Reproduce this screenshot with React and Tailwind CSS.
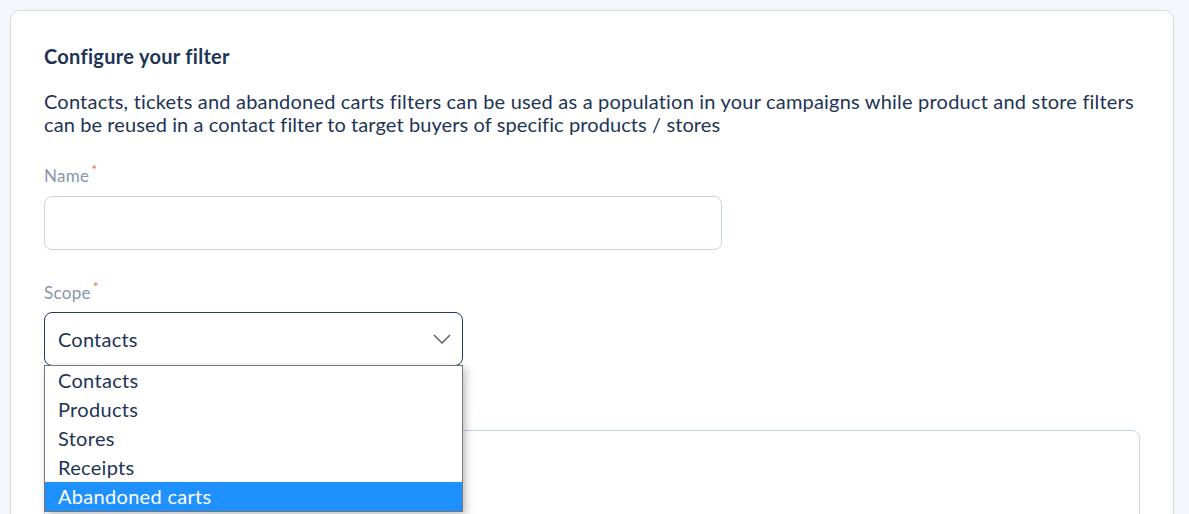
import React from "react";

export default function App() {
  const font = { fontFamily: '"Lato", "Noto Sans", sans-serif' };
  const items = ["Contacts", "Products", "Stores", "Receipts", "Abandoned carts"];
  return (
    <div className="w-[1189px] h-[514px] overflow-hidden bg-[#f3f6fb] pt-[10px] pl-[10px]" style={font}>
      <div className="w-[1164px] h-[600px] bg-white border border-[#d3dbe7] rounded-[10px] px-[33px] pt-[33px]">
        <h2 className="text-[20px] font-bold tracking-[0.3px] text-[#1e3456] leading-[24px]">Configure your filter</h2>
        <div className="mt-[22px] text-[20px] tracking-[0.2px] leading-[23px] text-[#1e3456] whitespace-nowrap">
          <div>Contacts, tickets and abandoned carts filters can be used as a population in your campaigns while product and store filters</div>
          <div className="tracking-[0.1px]">can be reused in a contact filter to target buyers of specific products / stores</div>
        </div>
        <div className="mt-[30px] text-[17px] tracking-[0.3px] leading-[20px] text-[#8796ac]">
          Name<span className="text-[#f0785a] text-[14px] relative top-[-7px] ml-[2px]">*</span>
        </div>
        <div className="mt-[9px] w-[678px] h-[54px] border border-[#c8d5e6] rounded-[8px]"></div>
        <div className="mt-[33px] text-[17px] tracking-[0.3px] leading-[20px] text-[#8796ac]">
          Scope<span className="text-[#f0785a] text-[14px] relative top-[-7px] ml-[2px]">*</span>
        </div>
        <div className="relative mt-[8px] w-[419px]">
          <div className="h-[54px] border border-[#1f3a68] rounded-[8px] flex items-center justify-between pl-[13px] pr-[11px]">
            <span className="text-[20px] tracking-[0.2px] text-[#1e3456]">Contacts</span>
            <svg width="18" height="10" viewBox="0 0 18 10" fill="none" stroke="#555" strokeWidth="1.3">
              <path d="M1 1l8 8 8-8" />
            </svg>
          </div>
          <div className="absolute left-0 top-[53px] w-[419px] bg-white border border-[#767676] shadow-[3px_3px_8px_rgba(0,0,0,0.25)] z-10">
            {items.map((it, i) => (
              <div
                key={it}
                className={
                  "h-[29px] pl-[13px] pb-[1px] flex items-center text-[20px] tracking-[0.3px] " +
                  (i === 4 ? "bg-[#1e90ff] text-white" : "text-[#1e3456]")
                }
              >
                {it}
              </div>
            ))}
          </div>
        </div>
        <div className="mt-[64px] w-[1096px] h-[120px] border border-[#c8d5e6] rounded-[8px]"></div>
      </div>
    </div>
  );
}
